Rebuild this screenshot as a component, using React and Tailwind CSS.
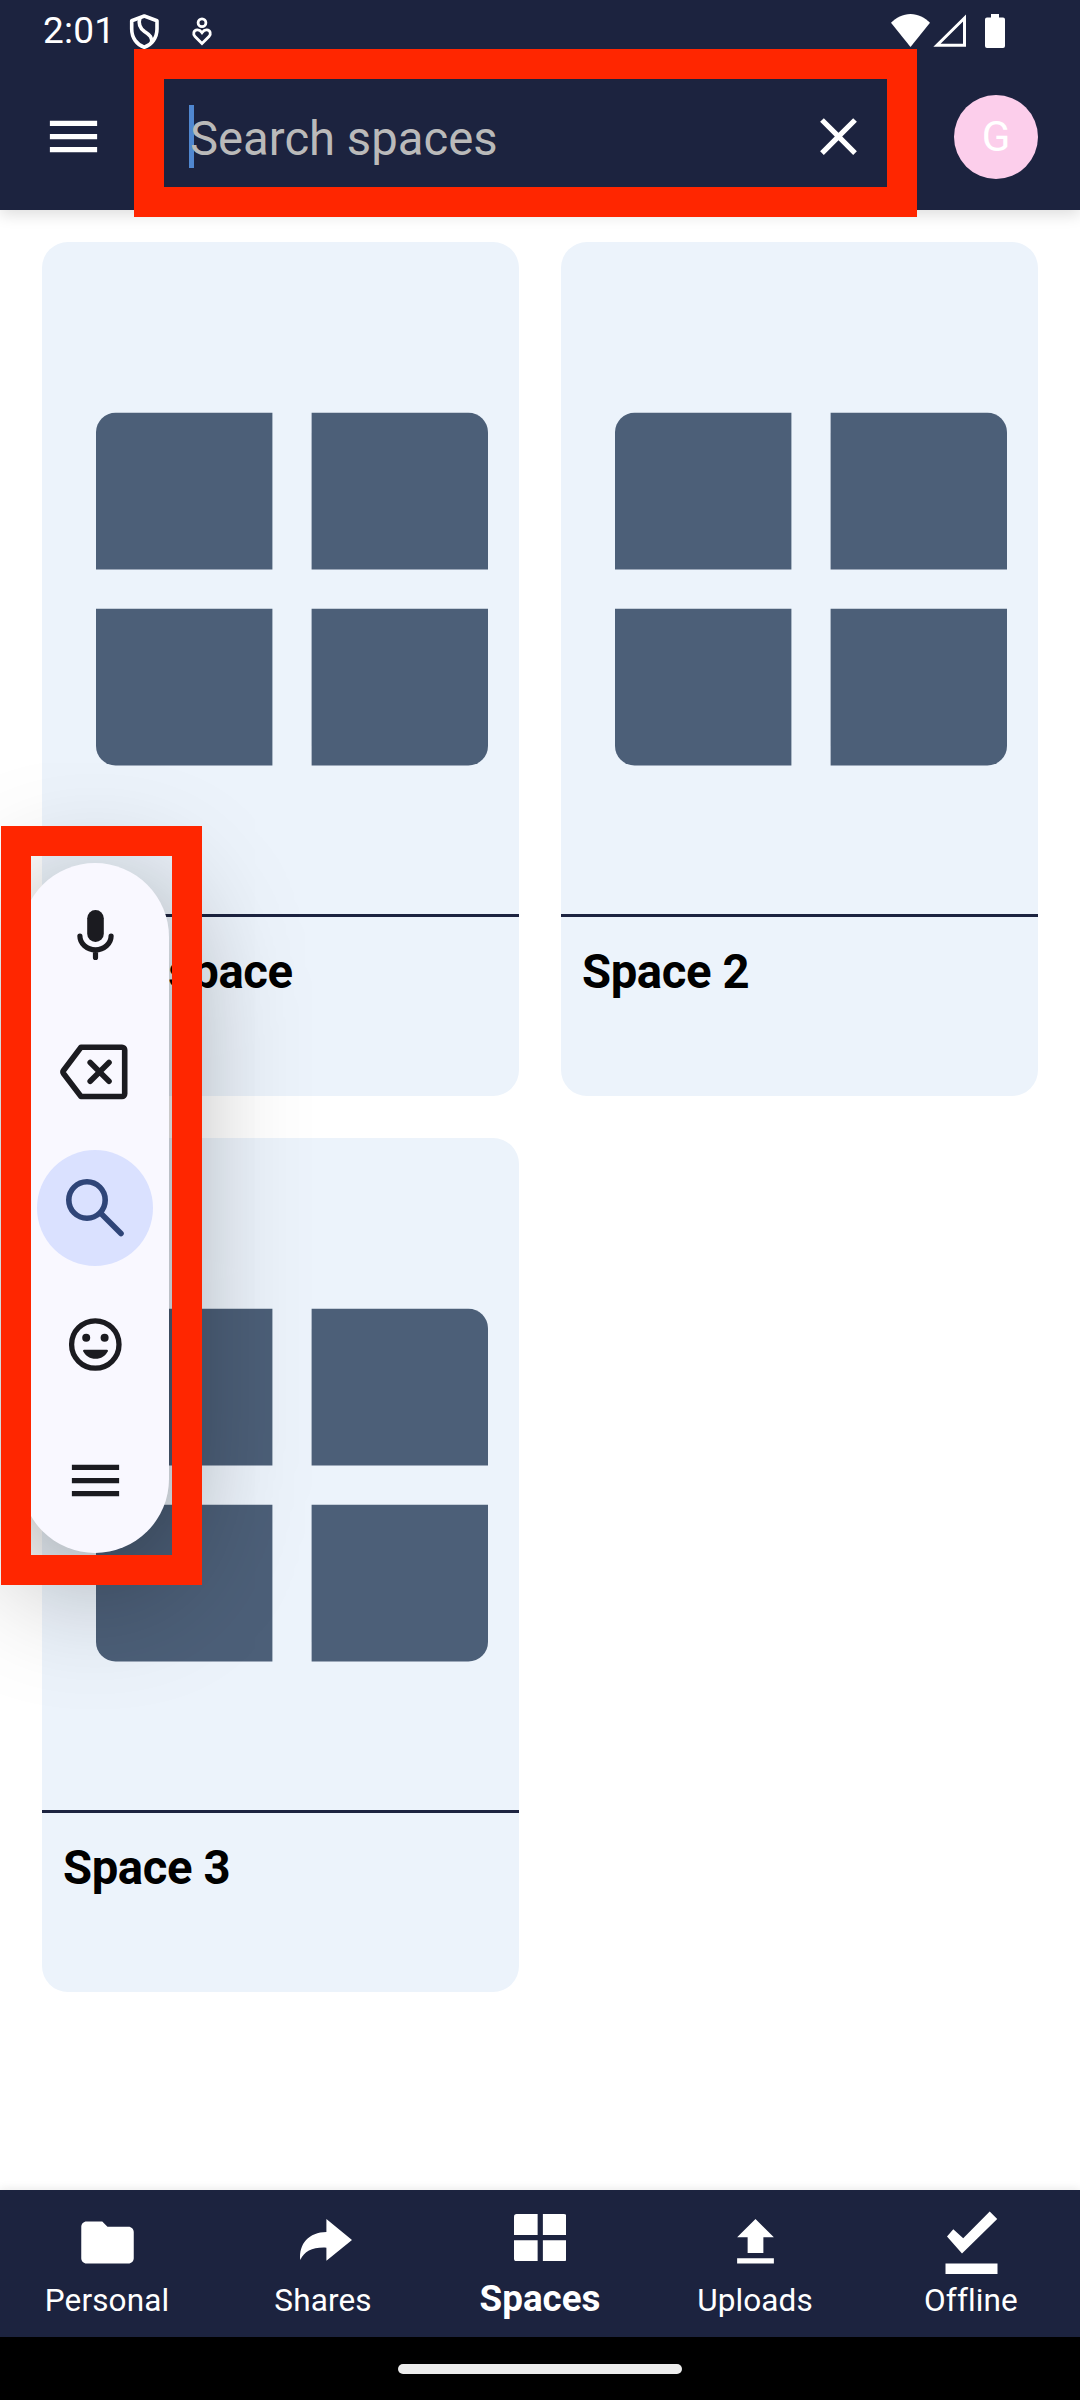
import React from "react";

const spaces = ["First space", "Space 2", "Space 3"];

function MenuIcon({ className }) {
  return (
    <svg viewBox="0 0 24 24" className={className} fill="currentColor">
      <path d="M3 18h18v-2H3v2zm0-5h18v-2H3v2zm0-7v2h18V6H3z" />
    </svg>
  );
}

function GridIcon({ className, viewBox = "0 0 20 18" }) {
  return (
    <svg viewBox={viewBox} className={className} fill="currentColor">
      <path d="M1 0H9V8H0V1A1 1 0 0 1 1 0Z" />
      <path d="M11 0H19A1 1 0 0 1 20 1V8H11Z" />
      <path d="M0 10H9V18H1A1 1 0 0 1 0 17Z" />
      <path d="M11 10H20V17A1 1 0 0 1 19 18H11Z" />
    </svg>
  );
}

function StatusBar() {
  return (
    <div className="flex h-[63px] shrink-0 items-start pl-[43px] pr-[75px] text-white">
      <span className="mt-[9px] w-[85px] text-[37px] leading-[44px] tracking-[0.2px]">2:01</span>
      <svg viewBox="128 13 33 37" className="mt-[13px] h-[37px] w-[33px]" fill="none" stroke="currentColor" strokeWidth="3.6" strokeLinejoin="round">
        <path d="M144.3 16L157 20.8V29C157 38 151.5 44.8 144.3 47.3C137 44.8 131.7 38 131.7 29V20.8Z" />
        <path d="M140 17.5C138 24 139.5 28 144.5 31.5C150 35 152.5 37.5 151.5 43" />
      </svg>
      <svg viewBox="191 17 22 30" className="ml-[30px] mt-[17px] h-[30px] w-[22px]" fill="none" stroke="currentColor" strokeWidth="2.8">
        <circle cx="202" cy="22.7" r="3.9" />
        <path d="M202 43.6L195 36.5C192.6 34 193.6 30 197.2 29.9C199.4 29.8 200.8 31 202 32.6C203.2 31 204.6 29.8 206.8 29.9C210.4 30 211.4 34 209 36.5Z" />
      </svg>
      <svg viewBox="890 13 41 35" className="ml-auto mt-[13px] h-[35px] w-[41px]" fill="currentColor">
        <path d="M910.5 47L891 22.8C896 17.5 903 14 910.5 14C918 14 925 17.5 930 22.8Z" />
      </svg>
      <svg viewBox="932 13 35 35" className="ml-px mt-[13px] h-[35px] w-[35px]" fill="none" stroke="currentColor" strokeWidth="3">
        <path d="M937 45.2H964.5V18Z" />
      </svg>
      <svg viewBox="985 14 20 34" className="ml-[18px] mt-[14px] h-[34px] w-[20px]" fill="currentColor">
        <path d="M991 14H999V17.5H1003A2 2 0 0 1 1005 19.5V46A2 2 0 0 1 1003 48H987A2 2 0 0 1 985 46V19.5A2 2 0 0 1 987 17.5H991Z" />
      </svg>
    </div>
  );
}

function Toolbar() {
  return (
    <div className="flex h-[147px] items-center px-[42px] text-white">
      <MenuIcon className="size-[63px]" />
      <div className="ml-[84px] flex h-[63px] flex-1 items-center">
        <span className="h-[63px] w-[5px] bg-[#5087d0]" />
        <span className="z-10 -ml-[4px] pt-[5px] text-[47.25px] leading-[56px] text-[#bababa]">Search spaces</span>
      </div>
      <svg viewBox="0 0 24 24" className="size-[63px]" fill="currentColor">
        <path d="M19 6.41L17.59 5 12 10.59 6.41 5 5 6.41 10.59 12 5 17.59 6.41 19 12 13.41 17.59 19 19 17.59 13.41 12z" />
      </svg>
      <div className="ml-[84px] flex size-[84px] items-center justify-center rounded-full bg-[#fcceeb] text-[42px] leading-[50px]">G</div>
    </div>
  );
}

function SpaceCard({ name }) {
  return (
    <article className="flex h-[854px] flex-col overflow-hidden rounded-[26px] bg-[#ecf3fb]">
      <div className="h-[675px] border-b-[3px] border-[#1c2340] pl-[54px] pt-[170px]">
        <GridIcon viewBox="0 -0.038 20 18.061" className="h-[354px] w-[392px] text-[#4c5f78]" />
      </div>
      <h2 className="px-[21px] pt-[27px] text-[47.25px] leading-[56px] font-bold tracking-[-0.4px] text-black">{name}</h2>
    </article>
  );
}

function FloatingKeyboard() {
  return (
    <div className="absolute left-[21px] top-[863px] flex h-[690px] w-[148px] flex-col items-center rounded-full bg-[#f9f8ff] pt-[14px] text-[#1b1b20] shadow-[0_26px_130px_rgba(0,0,0,0.42)]">
      <div className="flex h-[116px] w-[116px] items-center justify-center">
        <svg viewBox="74 908 42 54" className="h-[54px] w-[42px]">
          <rect x="87.2" y="910" width="16.6" height="32" rx="8.3" fill="currentColor" />
          <path d="M79.9 936A15.6 13.8 0 0 0 111.1 936M95.5 950V957.5" fill="none" stroke="currentColor" strokeWidth="5.2" strokeLinecap="round" />
        </svg>
      </div>
      <div className="mt-[21px] flex h-[116px] w-[116px] items-center justify-center">
        <svg viewBox="60 1043 70 58" className="h-[58px] w-[70px] overflow-visible" fill="none" stroke="currentColor" strokeWidth="5.6" strokeLinecap="round" strokeLinejoin="round">
          <path d="M81 1047.3H122A2.7 2.7 0 0 1 124.7 1050V1093.8A2.7 2.7 0 0 1 122 1096.5H81L63.5 1073.5Q62.4 1072 63.5 1070.5Z" />
          <path d="M90.2 1062.5L109 1081.3M109 1062.5L90.2 1081.3" />
        </svg>
      </div>
      <div className="mt-[20px] flex h-[116px] w-[116px] items-center justify-center rounded-full bg-[#dae1ff] text-[#2f4578]">
        <svg viewBox="65 1178 60 60" className="size-[60px]" fill="none" stroke="currentColor" strokeWidth="5.6" strokeLinecap="round">
          <circle cx="87" cy="1200" r="18.2" />
          <path d="M101 1213.5L121 1233.5" />
        </svg>
      </div>
      <div className="mt-[20px] flex h-[116px] w-[116px] items-center justify-center">
        <svg viewBox="67 1316 56 56" className="size-[56px]">
          <circle cx="95.3" cy="1344.5" r="23.7" fill="none" stroke="currentColor" strokeWidth="5.3" />
          <circle cx="86.2" cy="1337.7" r="4" fill="currentColor" />
          <circle cx="104.6" cy="1337.7" r="4" fill="currentColor" />
          <path d="M84 1349.8H107Q108.5 1349.8 107.7 1351.5C105.5 1356 101 1358.8 95.5 1358.8C90 1358.8 85.5 1356 83.3 1351.5Q82.5 1349.8 84 1349.8Z" fill="currentColor" />
        </svg>
      </div>
      <div className="mt-[20px] flex h-[117px] w-[116px] items-center justify-center">
        <MenuIcon className="size-[63px]" />
      </div>
    </div>
  );
}

function NavItem({ label, active, children }) {
  return (
    <div className={active ? "flex flex-1 flex-col items-center" : "flex flex-1 flex-col items-center pr-[2px]"}>
      <div className="flex h-[85px] w-full justify-center">{children}</div>
      <span
        className={
          active
            ? "text-[36.75px] leading-[48px] font-bold"
            : "pt-[2px] text-[31.5px] leading-[48px] tracking-[0.12px]"
        }
      >
        {label}
      </span>
    </div>
  );
}

function BottomNav() {
  return (
    <nav className="z-10 grid h-[147px] grid-cols-5 bg-[#1c233f] text-white shadow-[0_-2px_8px_rgba(0,0,0,0.08)]">
      <NavItem label="Personal">
        <svg viewBox="0 0 24 24" className="mt-[21px] size-[63px]" fill="currentColor">
          <path d="M10 4H4c-1.1 0-1.99.9-1.99 2L2 18c0 1.1.9 2 2 2h16c1.1 0 2-.9 2-2V8c0-1.1-.9-2-2-2h-8l-2-2z" />
        </svg>
      </NavItem>
      <NavItem label="Shares">
        <svg viewBox="296 2211 54 63" className="mt-[21px] h-[63px] w-[54px] overflow-visible" fill="currentColor">
          <path d="M326.4 2219L352 2240L326.4 2260.7V2247.7C313 2247 304.5 2251 300.3 2260C298.5 2244 309 2232 326.4 2232Z" />
        </svg>
      </NavItem>
      <NavItem label="Spaces" active>
        <GridIcon className="mt-[24px] h-[47.25px] w-[52.5px]" />
      </NavItem>
      <NavItem label="Uploads">
        <svg viewBox="0 0 24 24" className="mt-[21px] size-[63px]" fill="currentColor">
          <path d="M9 16h6v-6h4l-7-7-7 7h4zm-4 2h14v2H5z" />
        </svg>
      </NavItem>
      <NavItem label="Offline">
        <svg viewBox="944 2211 54 64" className="mt-[21px] h-[64px] w-[54px]" fill="currentColor">
          <path d="M989.7 2211.5L997.2 2219L962 2253.5L947 2236.5L953.3 2229.3L963.2 2238.3Z" />
          <path d="M945.5 2263.5H997.5V2274H945.5Z" />
        </svg>
      </NavItem>
    </nav>
  );
}

export default function App() {
  return (
    <div className="relative flex h-[2400px] w-[1080px] flex-col overflow-hidden bg-white font-['Roboto',sans-serif]">
      <header className="flex h-[210px] shrink-0 flex-col bg-[#1c233f] shadow-[0_5px_14px_rgba(0,0,0,0.13)]">
        <StatusBar />
        <Toolbar />
      </header>
      <main className="grid flex-1 grid-cols-2 content-start gap-[42px] px-[42px] pt-[32px]">
        {spaces.map((name) => (
          <SpaceCard key={name} name={name} />
        ))}
      </main>
      <BottomNav />
      <footer className="flex h-[63px] shrink-0 justify-center bg-black pt-[27px]">
        <div className="h-[10px] w-[284px] rounded-full bg-[#ececec]" />
      </footer>

      <FloatingKeyboard />
      <div className="absolute left-[134px] top-[49px] z-20 h-[168px] w-[783px] border-[30px] border-[#ff2600]" />
      <div className="absolute left-px top-[826px] z-20 h-[759px] w-[201px] border-[30px] border-[#ff2600]" />
    </div>
  );
}
